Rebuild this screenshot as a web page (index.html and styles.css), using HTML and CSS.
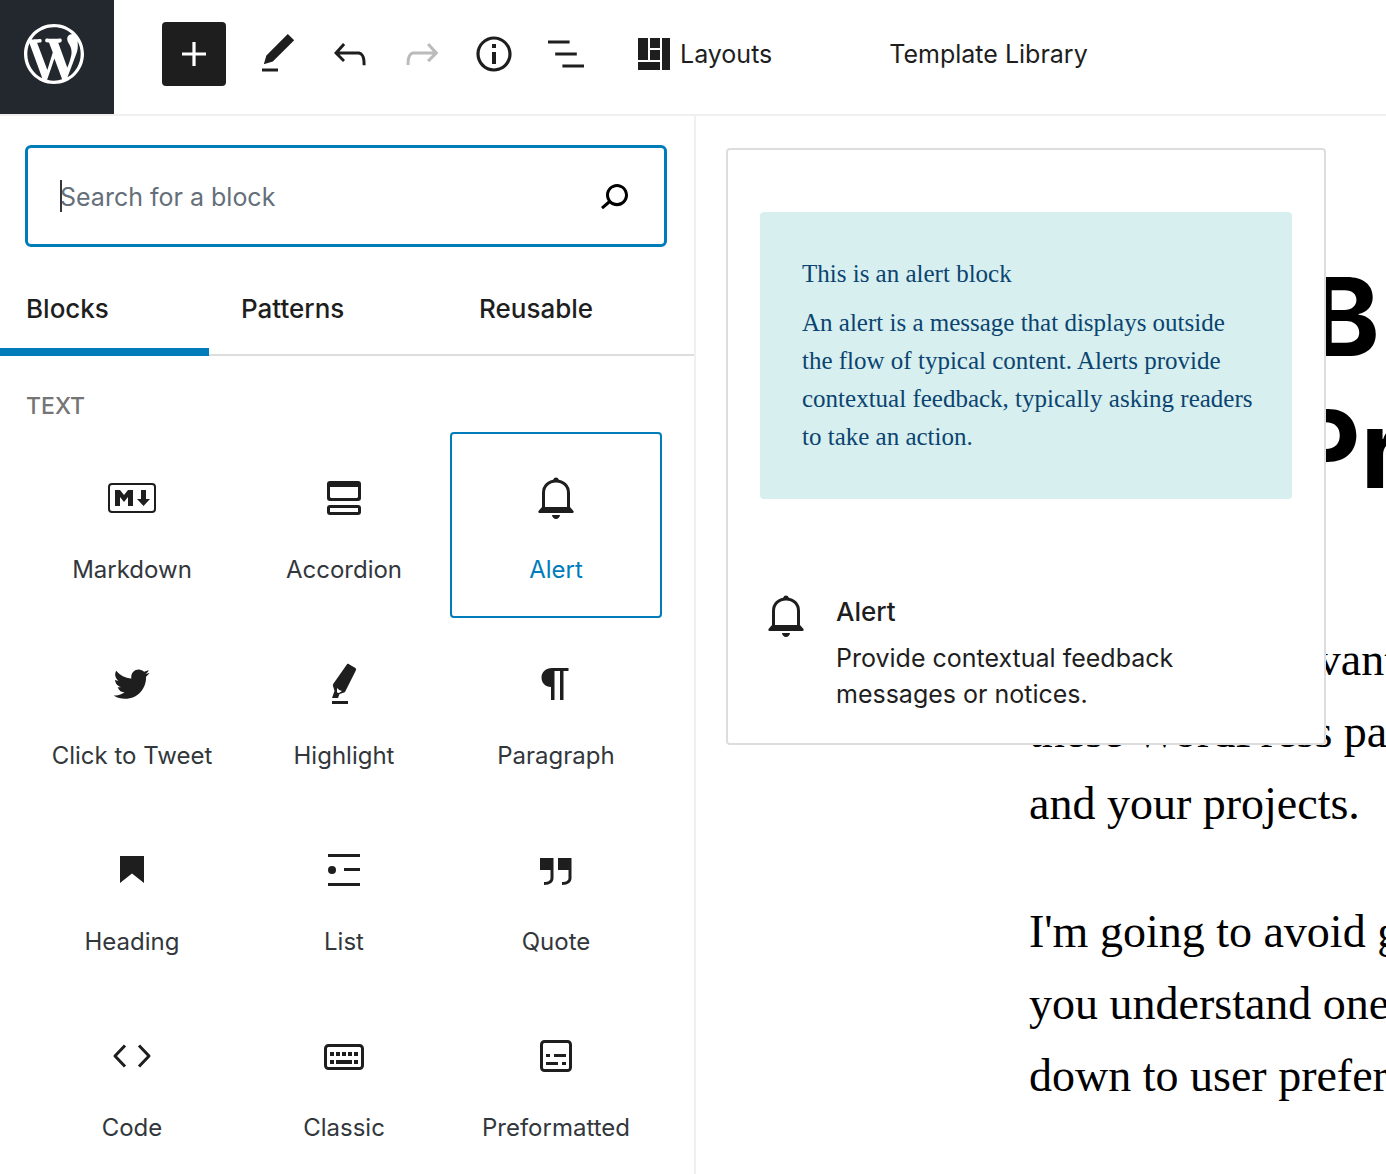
FILE: index.html
```html
<!DOCTYPE html>
<html lang="en">
<head>
    <meta charset="UTF-8">
    <meta name="viewport" content="width=device-width, initial-scale=1.0">
    <title>Edit Post</title>
    <link rel="stylesheet" href="styles.css">
</head>
<body>
    <header class="header">
        <a href="#" class="logo" aria-label="View Posts">
            <svg viewBox="0 0 20 20" width="60" height="60"><path d="M20 10c0-5.51-4.49-10-10-10C4.48 0 0 4.49 0 10c0 5.52 4.48 10 10 10 5.51 0 10-4.48 10-10zM7.78 15.37L4.37 6.22c.55-.02 1.17-.08 1.17-.08.5-.06.44-1.13-.06-1.11 0 0-1.45.11-2.37.11-.18 0-.37 0-.58-.01C4.12 2.69 6.87 1.11 10 1.11c2.33 0 4.45.87 6.05 2.34-.68-.11-1.65.39-1.65 1.58 0 .74.45 1.36.9 2.1.35.61.55 1.36.55 2.46 0 1.49-1.4 5-1.4 5l-3.03-8.37c.54-.02.82-.17.82-.17.5-.05.44-1.25-.06-1.22 0 0-1.44.12-2.38.12-.87 0-2.33-.12-2.33-.12-.5-.03-.56 1.2-.06 1.22l.92.08 1.26 3.41zM17.41 10c.24-.64.74-1.87.43-4.25.7 1.29 1.05 2.71 1.05 4.25 0 3.29-1.73 6.24-4.4 7.78.97-2.59 1.94-5.2 2.92-7.78zM6.1 18.09C3.12 16.65 1.11 13.53 1.11 10c0-1.3.23-2.48.72-3.59C3.25 10.3 4.67 14.2 6.1 18.09zm4.03-6.63l2.58 6.98c-.86.29-1.76.45-2.71.45-.79 0-1.57-.11-2.29-.33.81-2.38 1.62-4.74 2.42-7.1z"/></svg>
        </a>
        <div class="toolbar">
            <button class="inserter" aria-label="Add block">
                <svg class="icon" viewBox="0 0 24 24"><path d="M18 11.2h-5.2V6h-1.6v5.2H6v1.6h5.2V18h1.6v-5.2H18z"/></svg>
            </button>
            <button class="tool" aria-label="Tools">
                <svg class="icon" viewBox="0 0 24 24"><path d="M20.1 5.1L16.9 2 6.2 12.7l-1.3 4.4 4.5-1.3L20.1 5.1zM4 20.8h8v-1.5H4v1.5z"/></svg>
            </button>
            <button class="tool" aria-label="Undo">
                <svg class="icon" viewBox="0 0 24 24"><path d="M18.3 11.7c-.6-.6-1.4-.9-2.3-.9H6.7l2.9-3.3-1.1-1-4.5 5L8.5 16l1-1-2.7-2.7H16c.5 0 .9.2 1.3.5 1 1 1 3.4 1 4.5v.3h1.5v-.2c0-1.5 0-4.3-1.5-5.7z"/></svg>
            </button>
            <button class="tool" aria-label="Redo" disabled>
                <svg class="icon" viewBox="0 0 24 24"><path d="M15.6 6.5l-1.1 1 2.9 3.3H8c-.9 0-1.7.3-2.3.9-1.4 1.5-1.4 4.2-1.4 5.6v.2h1.5v-.3c0-1.1 0-3.5 1-4.5.3-.3.7-.5 1.3-.5h9.2L14.5 15l1.1 1.1 4.6-4.6-4.6-5z"/></svg>
            </button>
            <button class="tool" aria-label="Details">
                <svg class="icon" viewBox="0 0 24 24"><path d="M12 3.2c-4.8 0-8.8 3.9-8.8 8.8 0 4.8 3.9 8.8 8.8 8.8 4.8 0 8.8-3.9 8.8-8.8 0-4.8-4-8.8-8.8-8.8zm0 16c-4 0-7.2-3.3-7.2-7.2C4.8 8 8 4.8 12 4.8s7.2 3.3 7.2 7.2c0 4-3.2 7.2-7.2 7.2zM11 17h2v-6h-2v6zm0-8h2V7h-2v2z"/></svg>
            </button>
            <button class="tool" aria-label="List view">
                <svg class="icon" viewBox="0 0 24 24"><path d="M13.8 5.2H3v1.5h10.8V5.2zm-3.6 12v1.5H21v-1.5H10.2zm7.2-6H6.6v1.5h10.8v-1.5z"/></svg>
            </button>
            <button class="text-button layouts">
                <svg viewBox="0 0 32 32" width="32" height="32"><path d="M0 0h10v22H0zM12 0h10v10H12zM12 12h10v10H12zM0 24h22v8H0zM24 0h8v32h-8z"/></svg>
                Layouts
            </button>
            <button class="text-button library">Template Library</button>
        </div>
    </header>

    <div class="editor">
        <aside class="sidebar">
            <div class="search">
                <input type="text" id="block-search" class="search-input" placeholder="Search for a block" aria-label="Search for a block">
                <span class="caret"></span>
                <svg class="icon search-icon" viewBox="0 0 24 24"><path d="M13.5 6C10.5 6 8 8.5 8 11.5c0 1.1.3 2.1.9 3l-3.4 3 1 1.1 3.4-2.9c1 .9 2.2 1.4 3.6 1.4 3 0 5.5-2.5 5.5-5.5C19 8.5 16.5 6 13.5 6zm0 9.5c-2.2 0-4-1.8-4-4s1.8-4 4-4 4 1.8 4 4-1.8 4-4 4z"/></svg>
            </div>
            <div class="tabs" role="tablist">
                <button class="tab active" role="tab" aria-selected="true">Blocks</button>
                <button class="tab" role="tab">Patterns</button>
                <button class="tab" role="tab">Reusable</button>
            </div>
            <h2 class="category">Text</h2>
            <div class="blocks">
                <button class="block">
                    <svg class="icon" viewBox="0 0 48 48"><rect class="line thin" x="1" y="10" width="46" height="28" rx="3"/><path d="M7 32V16h5l4 5 4-5h5v16h-5v-9l-4 5-4-5v9zM33 16h5v9h4l-6.500 7-6.500-7h4z"/></svg>
                    <span>Markdown</span>
                </button>
                <button class="block">
                    <svg class="icon" viewBox="0 0 48 48"><path fill-rule="evenodd" d="M10 7h28a3 3 0 0 1 3 3v14a3 3 0 0 1-3 3H10a3 3 0 0 1-3-3V10a3 3 0 0 1 3-3zm0 6v10l1 1h26l1-1V13zM10 31h28a3 3 0 0 1 3 3v4a3 3 0 0 1-3 3H10a3 3 0 0 1-3-3v-4a3 3 0 0 1 3-3zm0 3v4h28v-4z"/></svg>
                    <span>Accordion</span>
                </button>
                <button class="block selected">
                    <svg class="icon" viewBox="0 0 48 48"><path class="line" d="M11.5 34V19c0-7 5-12 12.5-12s12.5 5 12.5 12v15"/><path d="M10 33h28l3.5 4c.5 1-.2 2-1 2h-33c-.8 0-1.5-1-1-2zM20 41h8c0 2-2 4-4 4s-4-2-4-4zM19 8c1.500-1 2-1.500 2.300-2.500a2.800 2.800 0 0 1 5.400 0C27 6.500 27.500 7 29 8z"/></svg>
                    <span>Alert</span>
                </button>
                <button class="block">
                    <svg class="icon" viewBox="-0.9 -1.2 26.6 26.6"><path d="M22.23 5.924c-.736.326-1.527.547-2.357.646.847-.508 1.498-1.312 1.804-2.27-.793.47-1.67.812-2.606.996C18.324 4.498 17.257 4 16.077 4c-2.266 0-4.103 1.837-4.103 4.103 0 .322.036.635.106.935-3.41-.17-6.433-1.804-8.457-4.287-.353.607-.556 1.312-.556 2.064 0 1.424.724 2.68 1.825 3.415-.673-.022-1.305-.207-1.86-.514v.052c0 1.988 1.415 3.647 3.293 4.023-.344.095-.707.145-1.08.145-.265 0-.522-.026-.773-.074.522 1.63 2.038 2.817 3.833 2.85-1.404 1.1-3.174 1.757-5.096 1.757-.332 0-.66-.02-.98-.057 1.816 1.164 3.973 1.843 6.29 1.843 7.547 0 11.675-6.252 11.675-11.675 0-.178-.004-.355-.012-.53.802-.578 1.497-1.3 2.047-2.124z"/></svg>
                    <span>Click to Tweet</span>
                </button>
                <button class="block">
                    <svg class="icon" viewBox="0 0 48 48"><path fill-rule="evenodd" d="M26.5 5c.5-1.200 1.500-1.400 2.500-.8l6 3.600c1 .6 1.300 1.500.8 2.600L25.500 31c-.5 1-1 1.500-2 1.700l-4 1.300-1.500 4H12l2.500-7-1.500-5c-.2-.7-.1-1.300.2-2zM17 28v4.500l2 .5 3-2c-2-.5-3.500-1.500-5-3z"/><path d="M12 41h16v3H12z"/></svg>
                    <span>Highlight</span>
                </button>
                <button class="block">
                    <svg class="icon" viewBox="0 0 48 48"><path d="M36.5 8H20c-6 0-10.5 4-10.5 9.5S13.5 27 19 27v13h3.5V11H28v29h3.5V11h5z"/></svg>
                    <span>Paragraph</span>
                </button>
                <button class="block">
                    <svg class="icon" viewBox="0 0 48 48"><path d="M12 10h24v27l-12-9.500-12 9.500z"/></svg>
                    <span>Heading</span>
                </button>
                <button class="block">
                    <svg class="icon" viewBox="0 0 48 48"><path d="M8 8h32v3H8zM24 22h16v3H24zM8 37h32v3H8z"/><circle cx="12" cy="24" r="4"/></svg>
                    <span>List</span>
                </button>
                <button class="block">
                    <svg class="icon" viewBox="0 0 48 48"><path d="M8 12h13.5v20c0 4-3 7-9.500 7v-3c4.500 0 6.500-1.500 6.500-4v-8H8zM26 12h13.500v20c0 4-3 7-9.500 7v-3c4.500 0 6.500-1.500 6.500-4v-8H26z"/></svg>
                    <span>Quote</span>
                </button>
                <button class="block">
                    <svg class="icon" viewBox="0 0 48 48"><path class="line" stroke-linejoin="round" d="M17 13.500L7 24l10 10.500M31 13.500L41 24 31 34.500"/></svg>
                    <span>Code</span>
                </button>
                <button class="block">
                    <svg class="icon" viewBox="0 0 48 48"><rect class="line" x="5.5" y="13.5" width="37" height="23" rx="3"/><path d="M10 20h4v4h-4zM16 20h4v4h-4zM22 20h4v4h-4zM28 20h4v4h-4zM34 20h4v4h-4zM10 28h4v4h-4zM16 28h16v4H16zM34 28h4v4h-4z"/></svg>
                    <span>Classic</span>
                </button>
                <button class="block">
                    <svg class="icon" viewBox="0 0 48 48"><rect class="line" x="9.5" y="9.5" width="29" height="29" rx="3"/><path d="M14 22h4v3h-4zM22 22h12v3H22zM14 30h12v3H14zM30 30h4v3h-4z"/></svg>
                    <span>Preformatted</span>
                </button>
            </div>
        </aside>

        <main class="canvas">
            <h1 class="post-title">Easy Builders<br>Best Practices</h1>
            <p>I will list the advantages of<br>these WordPress page builders<br>and your projects.</p>
            <p>I'm going to avoid giving<br>you understand one thing,<br>down to user preference</p>

            <section class="preview">
                <div class="alert">
                    <p class="alert-title">This is an alert block</p>
                    <p>An alert is a message that displays outside<br>the flow of typical content. Alerts provide<br>contextual feedback, typically asking readers<br>to take an action.</p>
                </div>
                <div class="card">
                    <svg class="icon" viewBox="0 0 48 48"><path class="line" d="M11.5 34V19c0-7 5-12 12.5-12s12.5 5 12.5 12v15"/><path d="M10 33h28l3.5 4c.5 1-.2 2-1 2h-33c-.8 0-1.5-1-1-2zM20 41h8c0 2-2 4-4 4s-4-2-4-4zM19 8c1.500-1 2-1.500 2.300-2.500a2.800 2.800 0 0 1 5.400 0C27 6.500 27.500 7 29 8z"/></svg>
                    <div class="card-body">
                        <h2 class="card-title">Alert</h2>
                        <p class="card-text">Provide contextual feedback messages or notices.</p>
                    </div>
                </div>
            </section>
        </main>
    </div>
</body>
</html>
```
FILE: styles.css
```css
* {
    box-sizing: border-box;
}
body {
    margin: 0;
    height: 100vh;
    display: flex;
    flex-direction: column;
    overflow: hidden;
    background-color: #fff;
    color: #1e1e1e;
    font-family: Inter, "Liberation Sans", sans-serif;
    font-size: 25px;
}
h1, h2, p {
    margin: 0;
}
button {
    padding: 0;
    border: none;
    background: none;
    color: inherit;
    font: inherit;
    cursor: pointer;
}
svg {
    display: block;
    flex: none;
    fill: currentColor;
}
.icon {
    width: 48px;
    height: 48px;
}
.line {
    fill: none;
    stroke: currentColor;
    stroke-width: 3;
}
.thin {
    stroke-width: 2;
}

/* top bar */
.header {
    display: flex;
    flex: none;
    border-bottom: 2px solid #f0f0f0;
}
.logo {
    padding: 24px 30px 30px 24px;
    background-color: #23282e;
    color: #fff;
}
.toolbar {
    display: flex;
    align-items: center;
    padding: 0 48px 6px;
    white-space: nowrap;
}
.inserter {
    display: flex;
    align-items: center;
    justify-content: center;
    width: 64px;
    height: 64px;
    margin-right: 16px;
    border-radius: 4px;
    background-color: #1e1e1e;
    color: #fff;
}
.tool {
    display: flex;
    justify-content: center;
    width: 72px;
}
.tool:disabled {
    color: #bbb;
}
.text-button {
    display: flex;
    align-items: center;
    gap: 10px;
    line-height: 32px;
}
.layouts {
    margin-left: 36px;
}
.library {
    margin-left: 117px;
}

.editor {
    display: flex;
    flex: 1;
    min-height: 0;
}

/* block inserter */
.sidebar {
    flex: none;
    width: 696px;
    border-right: 2px solid #f0f0f0;
    overflow: hidden;
}
.search {
    position: relative;
    margin: 29px 27px 0 25px;
}
.search-input {
    display: block;
    width: 100%;
    height: 102px;
    padding: 2px 80px 0 32px;
    border: 3px solid #007cba;
    border-radius: 6px;
    outline: none;
    font: inherit;
    color: #1e1e1e;
}
.search-input::placeholder {
    color: #646f79;
    opacity: 1;
}
.caret {
    position: absolute;
    top: 35px;
    left: 35px;
    width: 2px;
    height: 32px;
    background-color: #32373c;
}
.search-icon {
    position: absolute;
    top: 27px;
    right: 29px;
    color: #000;
}
.tabs {
    display: grid;
    grid-template-columns: 209fr 238fr 247fr;
    height: 109px;
    box-shadow: inset 0 -2px #ddd;
}
.tab {
    padding: 14px 32px 0;
    text-align: left;
    font-size: 26px;
    font-weight: 500;
}
.tab.active {
    padding-left: 26px;
    box-shadow: inset 0 -8px #007cba;
}
.category {
    margin: 36px 26px 12px;
    font-size: 23px;
    line-height: 28px;
    font-weight: 500;
    text-transform: uppercase;
    color: #757575;
}
.blocks {
    display: grid;
    grid-template-columns: repeat(3, 1fr);
    grid-auto-rows: 186px;
    padding: 0 32px 0 26px;
}
.block {
    display: flex;
    flex-direction: column;
    align-items: center;
    gap: 32px;
    padding-top: 40px;
    border: 2px solid transparent;
    border-radius: 4px;
    font-size: 24px;
    line-height: 32px;
    color: #32373c;
}
.block .icon {
    color: #1e1e1e;
}
.block.selected {
    border-color: #007cba;
    color: #007cba;
}

/* post content */
.canvas {
    position: relative;
    flex: 1;
    min-width: 0;
    padding: 135px 0 0 333px;
    overflow: hidden;
    white-space: nowrap;
    color: #000;
    font-family: "Liberation Serif", serif;
    font-size: 46px;
    line-height: 72px;
}
.canvas > p {
    margin-bottom: 56px;
}
.post-title {
    margin-bottom: 109px;
    font-family: Inter, "Liberation Sans", sans-serif;
    font-size: 108px;
    line-height: 132px;
    font-weight: 700;
}

/* block preview */
.preview {
    position: absolute;
    top: 32px;
    left: 30px;
    width: 600px;
    padding: 62px 32px 31px;
    border: 2px solid #ddd;
    border-radius: 4px;
    background-color: #fff;
}
.alert {
    padding: 43px 32px 43px 42px;
    border-radius: 4px;
    background-color: #d7efef;
    color: #0b4470;
    font-size: 25px;
    line-height: 38px;
}
.alert-title {
    margin-bottom: 11px;
}
.card {
    display: flex;
    gap: 26px;
    margin-top: 93px;
    padding-left: 2px;
    white-space: normal;
    font-family: Inter, "Liberation Sans", sans-serif;
    font-size: 25px;
    line-height: 36px;
    color: #1e1e1e;
}
.card-body {
    padding-top: 2px;
}
.card-title {
    margin-bottom: 10px;
    font-size: 26px;
    font-weight: 500;
}
.card-text {
    max-width: 400px;
}
```
